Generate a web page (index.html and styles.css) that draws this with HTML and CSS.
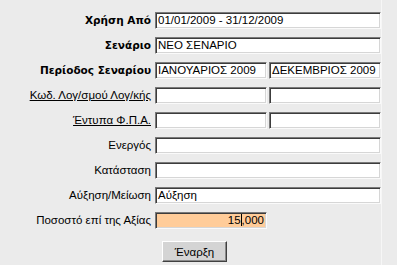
FILE: index.html
```html
<!DOCTYPE html>
<html lang="el">
<head>
<meta charset="utf-8">
<title>Σενάριο</title>
<link rel="stylesheet" href="styles.css">
</head>
<body>
<div class="panel">
  <div class="form">
    <div class="label bold">Χρήση Από</div>
    <div class="field full">01/01/2009 - 31/12/2009</div>

    <div class="label bold">Σενάριο</div>
    <div class="field full">ΝΕΟ ΣΕΝΑΡΙΟ</div>

    <div class="label bold">Περίοδος Σεναρίου</div>
    <div class="pair">
      <div class="field">ΙΑΝΟΥΑΡΙΟΣ 2009</div>
      <div class="field">ΔΕΚΕΜΒΡΙΟΣ 2009</div>
    </div>

    <div class="label link">Κωδ. Λογ/σμού Λογ/κής</div>
    <div class="pair">
      <div class="field"></div>
      <div class="field"></div>
    </div>

    <div class="label link">Έντυπα Φ.Π.Α.</div>
    <div class="pair">
      <div class="field"></div>
      <div class="field"></div>
    </div>

    <div class="label">Ενεργός</div>
    <div class="field full"></div>

    <div class="label">Κατάσταση</div>
    <div class="field full"></div>

    <div class="label">Αύξηση/Μείωση</div>
    <div class="field full">Αύξηση</div>

    <div class="label">Ποσοστό επί της Αξίας</div>
    <div class="pair">
      <div class="field number">15<span class="caret"></span>,000</div>
    </div>
  </div>
  <div class="actions">
    <button class="btn" type="button">Έναρξη</button>
  </div>
</div>
</body>
</html>
```

FILE: styles.css
```css
html, body {
  margin: 0;
  padding: 0;
}

body {
  background: #ebebeb;
  font-family: "Liberation Sans", Arial, sans-serif;
  font-size: 11.5px;
  color: #000;
  width: 397px;
  height: 265px;
  overflow: hidden;
}

.panel {
  width: 382px;
  height: 265px;
  box-sizing: border-box;
  border-right: 1px solid #f6f6f6;
  padding-top: 12px;
}

.form {
  display: grid;
  grid-template-columns: 151px 226px;
  grid-auto-rows: 17px;
  column-gap: 4px;
  row-gap: 8px;
}

.label {
  text-align: right;
  line-height: 17px;
  white-space: nowrap;
}

.bold {
  font-family: "DejaVu Sans", "Liberation Sans", sans-serif;
  font-size: 10.5px;
  font-weight: bold;
}

.link {
  text-decoration: underline;
}

.pair {
  display: grid;
  grid-template-columns: 112px 112px;
  column-gap: 2px;
}

.field {
  box-sizing: border-box;
  height: 17px;
  background: #fff;
  border-top: 1px solid #7a7a7a;
  border-left: 1px solid #7a7a7a;
  border-right: 1px solid #fafafa;
  border-bottom: 1px solid #fafafa;
  box-shadow: inset 1px 1px 0 #3c3c3c, inset -1px -1px 0 #d6d6d6;
  padding: 0 2px 0 2px;
  line-height: 15px;
  white-space: nowrap;
  overflow: hidden;
}

.number {
  background: #ffcc99;
  text-align: right;
  padding-right: 2px;
}

.caret {
  display: inline-block;
  width: 0;
  height: 12px;
  border-left: 1px solid #000;
  vertical-align: -2px;
}

.actions {
  padding: 12px 0 0 162px;
}

.btn {
  box-sizing: border-box;
  width: 65px;
  height: 21px;
  margin: 0;
  padding: 0;
  font-family: "Liberation Sans", Arial, sans-serif;
  font-size: 11.5px;
  color: #000;
  background: #d4d4d4;
  border-top: 1px solid #ffffff;
  border-left: 1px solid #ffffff;
  border-right: 1px solid #404040;
  border-bottom: 1px solid #404040;
  box-shadow: inset -1px -1px 0 #8a8a8a;
}
```
